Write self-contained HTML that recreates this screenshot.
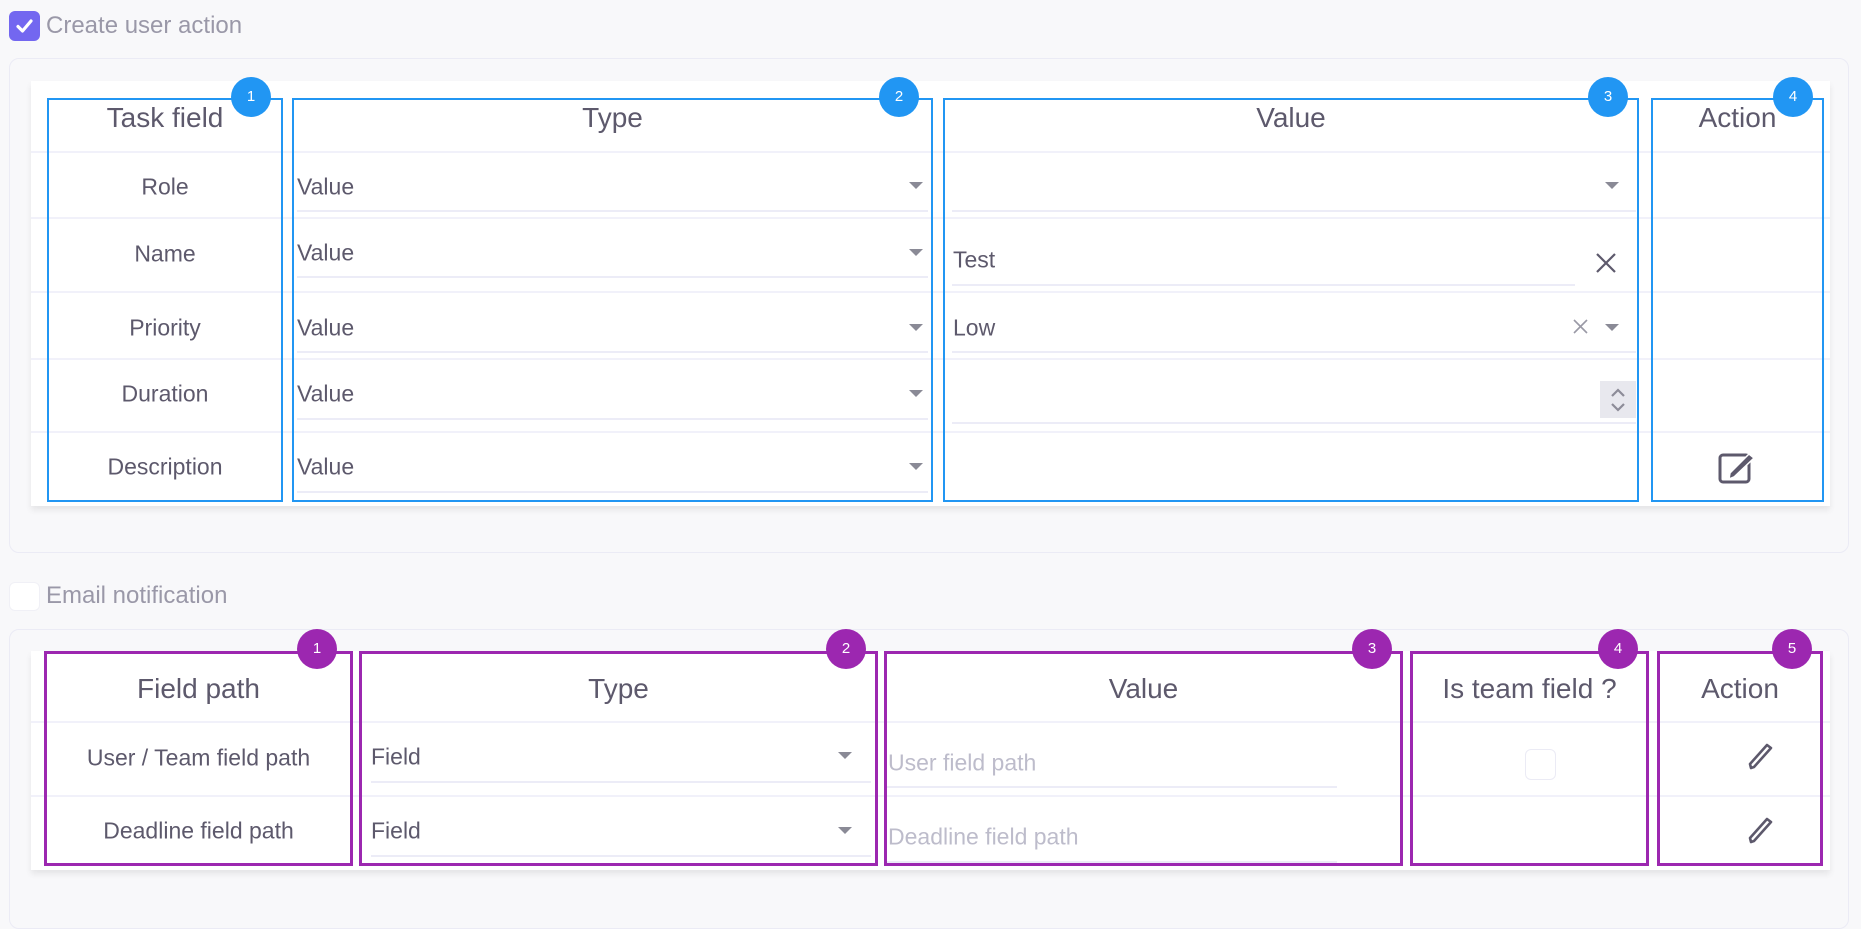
<!DOCTYPE html>
<html><head><meta charset="utf-8"><style>
*{box-sizing:border-box;margin:0;padding:0}
body{width:1861px;height:896px;background:#f8f8fa;position:relative;overflow:hidden;font-family:"Liberation Sans Narrow","Liberation Sans",sans-serif;color:#5d596c}
.a{position:absolute}
.card{position:absolute;left:9px;right:12px;background:#f8f8fa;border:1.5px solid #ebebf5;border-radius:10px}
.tbl{position:absolute;left:31px;width:1799px;background:#fff;box-shadow:0 4px 6px rgba(0,0,0,.08)}
.hl{position:absolute;left:31px;width:1799px;height:2px;background:#f1f1fa}
.bb{position:absolute;border:2px solid #2196f3}
.pb{position:absolute;border:3px solid #9c27b0}
.badge{position:absolute;width:40px;height:40px;border-radius:50%;color:#fff;font-size:15px;text-align:center;line-height:40px;font-family:"Liberation Sans",sans-serif}
.bl{background:#2196f3}.pu{background:#9c27b0}
.hd{position:absolute;font-size:28px;text-align:center;transform:translateY(-50%)}
.lb{position:absolute;font-size:23px;text-align:center;transform:translateY(-50%)}
.tx{position:absolute;font-size:23px;transform:translateY(-50%)}
.ul{position:absolute;height:2px;background:#ececf7}
.arr{position:absolute;width:0;height:0;border-left:7px solid transparent;border-right:7px solid transparent;border-top:7px solid #8a8a96}
.ph{color:#bdbccb}
</style></head><body>
<div class="a" style="left:9px;top:11px;width:31px;height:30px;border-radius:6px;background:#7367f0"></div>
<svg class="a" style="left:9px;top:11px" width="31" height="30"><path d="M9 15.5l4.5 4.5L22 10" stroke="#fff" stroke-width="3.2" fill="none" stroke-linecap="round" stroke-linejoin="round"/></svg>
<div class="tx" style="left:46px;top:26px;color:#9a98a8;font-size:24px">Create user action</div>

<div class="card" style="top:58px;height:495px"></div>
<div class="tbl" style="top:81px;height:425px"></div>
<div class="hl" style="top:151px"></div><div class="hl" style="top:217px"></div><div class="hl" style="top:291px"></div><div class="hl" style="top:358px"></div><div class="hl" style="top:431px"></div>

<div class="hd" style="left:47px;width:236px;top:118px">Task field</div>
<div class="hd" style="left:292px;width:641px;top:118px">Type</div>
<div class="hd" style="left:943px;width:696px;top:118px">Value</div>
<div class="hd" style="left:1651px;width:173px;top:118px">Action</div>

<div class="lb" style="left:47px;width:236px;top:187px">Role</div>
<div class="lb" style="left:47px;width:236px;top:254px">Name</div>
<div class="lb" style="left:47px;width:236px;top:328px">Priority</div>
<div class="lb" style="left:47px;width:236px;top:394px">Duration</div>
<div class="lb" style="left:47px;width:236px;top:467px">Description</div>

<div class="tx" style="left:297px;top:187px">Value</div><div class="arr" style="left:909px;top:182px"></div><div class="ul" style="left:297px;width:631px;top:210px"></div>
<div class="tx" style="left:297px;top:253px">Value</div><div class="arr" style="left:909px;top:249px"></div><div class="ul" style="left:297px;width:631px;top:276px"></div>
<div class="tx" style="left:297px;top:328px">Value</div><div class="arr" style="left:909px;top:324px"></div><div class="ul" style="left:297px;width:631px;top:351px"></div>
<div class="tx" style="left:297px;top:394px">Value</div><div class="arr" style="left:909px;top:390px"></div><div class="ul" style="left:297px;width:631px;top:418px"></div>
<div class="tx" style="left:297px;top:467px">Value</div><div class="arr" style="left:909px;top:463px"></div><div class="ul" style="left:297px;width:631px;top:491px"></div>

<div class="arr" style="left:1605px;top:182px"></div><div class="ul" style="left:952px;width:684px;top:210px"></div>
<div class="tx" style="left:953px;top:260px">Test</div><div class="ul" style="left:952px;width:623px;top:284px"></div>
<svg class="a" style="left:1595px;top:252px" width="22" height="22"><path d="M2 2L20 20M20 2L2 20" stroke="#5d596c" stroke-width="2.2"/></svg>
<div class="tx" style="left:953px;top:328px">Low</div><div class="ul" style="left:952px;width:684px;top:351px"></div>
<svg class="a" style="left:1573px;top:319px" width="15" height="15"><path d="M1 1L14 14M14 1L1 14" stroke="#9a99a6" stroke-width="1.6"/></svg>
<div class="arr" style="left:1605px;top:324px"></div>
<div class="a" style="left:1600px;top:381px;width:36px;height:37px;background:#e8e8ee"></div>
<svg class="a" style="left:1600px;top:381px" width="36" height="37"><path d="M12 15l6-6 6 6M12 23l6 6 6-6" stroke="#8d8c98" stroke-width="2.2" fill="none"/></svg>
<div class="ul" style="left:952px;width:684px;top:422px"></div>
<svg class="a" style="left:1716px;top:448px" width="44" height="38"><rect x="4" y="7" width="29" height="27" rx="3" fill="none" stroke="#5d596c" stroke-width="3"/><path d="M18 29l-5 2 1-6 19-19 5 4z" fill="#5d596c" stroke="#fff" stroke-width="1.5"/></svg>

<div class="bb" style="left:47px;top:98px;width:236px;height:404px"></div>
<div class="bb" style="left:292px;top:98px;width:641px;height:404px"></div>
<div class="bb" style="left:943px;top:98px;width:696px;height:404px"></div>
<div class="bb" style="left:1651px;top:98px;width:173px;height:404px"></div>
<div class="badge bl" style="left:231px;top:77px">1</div>
<div class="badge bl" style="left:879px;top:77px">2</div>
<div class="badge bl" style="left:1588px;top:77px">3</div>
<div class="badge bl" style="left:1773px;top:77px">4</div>

<div class="a" style="left:9px;top:582px;width:31px;height:29px;border-radius:6px;background:#fff;border:1px solid #f0f0f6"></div>
<div class="tx" style="left:46px;top:596px;color:#9a98a8;font-size:24px">Email notification</div>

<div class="card" style="top:629px;height:300px"></div>
<div class="tbl" style="top:651px;height:219px"></div>
<div class="hl" style="top:721px"></div><div class="hl" style="top:795px"></div>

<div class="hd" style="left:44px;width:309px;top:689px">Field path</div>
<div class="hd" style="left:359px;width:519px;top:689px">Type</div>
<div class="hd" style="left:884px;width:519px;top:689px">Value</div>
<div class="hd" style="left:1410px;width:239px;top:689px">Is team field ?</div>
<div class="hd" style="left:1657px;width:166px;top:689px">Action</div>

<div class="lb" style="left:44px;width:309px;top:758px">User / Team field path</div>
<div class="lb" style="left:44px;width:309px;top:831px">Deadline field path</div>
<div class="tx" style="left:371px;top:757px">Field</div><div class="arr" style="left:838px;top:752px"></div><div class="ul" style="left:371px;width:500px;top:781px"></div>
<div class="tx" style="left:371px;top:831px">Field</div><div class="arr" style="left:838px;top:827px"></div><div class="ul" style="left:371px;width:500px;top:855px"></div>
<div class="tx ph" style="left:888px;top:763px">User field path</div><div class="ul" style="left:886px;width:451px;top:786px"></div>
<div class="tx ph" style="left:888px;top:837px">Deadline field path</div><div class="ul" style="left:886px;width:451px;top:861px"></div>
<div class="a" style="left:1525px;top:749px;width:31px;height:31px;border-radius:6px;border:1.5px solid #ebebf5;background:#fff"></div>
<svg class="a" style="left:1745px;top:740px" width="30" height="32"><path d="M6 28l-1-4 17-19 4 3-17 19z" fill="none" stroke="#5d596c" stroke-width="2.6" stroke-linejoin="round"/></svg>
<svg class="a" style="left:1745px;top:814px" width="30" height="32"><path d="M6 28l-1-4 17-19 4 3-17 19z" fill="none" stroke="#5d596c" stroke-width="2.6" stroke-linejoin="round"/></svg>

<div class="pb" style="left:44px;top:651px;width:309px;height:215px"></div>
<div class="pb" style="left:359px;top:651px;width:519px;height:215px"></div>
<div class="pb" style="left:884px;top:651px;width:519px;height:215px"></div>
<div class="pb" style="left:1410px;top:651px;width:239px;height:215px"></div>
<div class="pb" style="left:1657px;top:651px;width:166px;height:215px"></div>
<div class="badge pu" style="left:297px;top:629px">1</div>
<div class="badge pu" style="left:826px;top:629px">2</div>
<div class="badge pu" style="left:1352px;top:629px">3</div>
<div class="badge pu" style="left:1598px;top:629px">4</div>
<div class="badge pu" style="left:1772px;top:629px">5</div>
</body></html>
